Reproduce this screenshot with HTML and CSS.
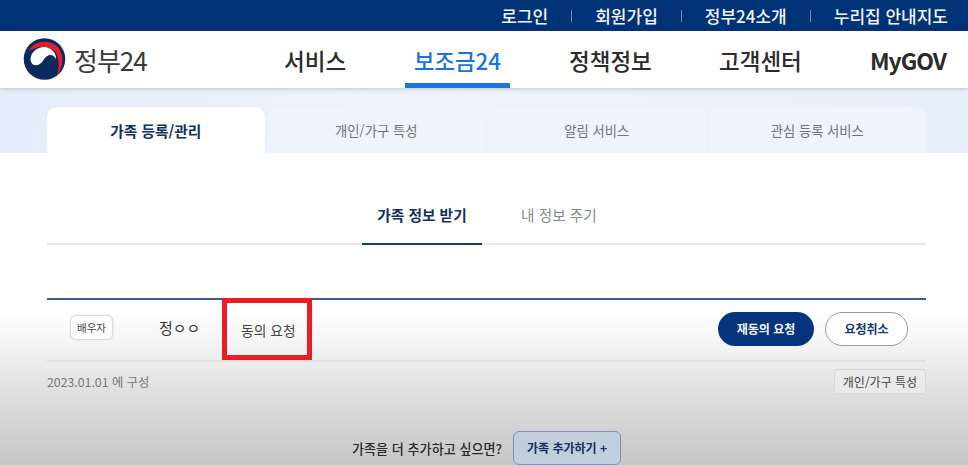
FILE: index.html
```html
<!DOCTYPE html>
<html lang="ko">
<head>
<meta charset="utf-8">
<title>정부24 가족 등록/관리</title>
<link rel="stylesheet" href="styles.css">
</head>
<body>
<div class="topbar">
  <a class="toplink">로그인</a><i class="sep"></i>
  <a class="toplink">회원가입</a><i class="sep"></i>
  <a class="toplink">정부24소개</a><i class="sep"></i>
  <a class="toplink">누리집 안내지도</a>
</div>
<header class="header">
  <div class="logo">
    <svg class="emblem" viewBox="0 0 42 42" width="43" height="42">
      <circle cx="21" cy="21" r="20.8" fill="#0c2a5e"/>
      <path d="M5.500 13C9.500 4 21 2 29.500 5.500C39 10 43 24 33 39C36 29 36 21 32.500 15C29 9.500 20 7.500 14 9.500C11 10.500 8 11 5.500 13Z" fill="#e21f2d"/>
      <path d="M7 22C7 14 14 9 20.500 9C27 9 33 14 32.500 21C29.500 15.500 24 15.500 20 22C16 29 8 29 7 22Z" fill="#fff"/>
    </svg>
    <span class="logotext">정부24</span>
  </div>
  <nav class="nav">
    <a class="navitem n1">서비스</a>
    <a class="navitem n2">보조금24</a>
    <a class="navitem n3">정책정보</a>
    <a class="navitem n4">고객센터</a>
    <a class="navitem n5">MyGOV</a>
  </nav>
</header>
<div class="tabband">
  <div class="tabs">
    <a class="tab current">가족 등록/관리</a>
    <a class="tab">개인/가구 특성</a>
    <a class="tab">알림 서비스</a>
    <a class="tab">관심 등록 서비스</a>
  </div>
</div>
<main class="content">
  <div class="subtabs">
    <a class="subtab on">가족 정보 받기</a>
    <a class="subtab">내 정보 주기</a>
  </div>
  <section class="family">
    <div class="member">
      <span class="badge">배우자</span>
      <span class="name">정ㅇㅇ</span>
      <span class="status">동의 요청</span>
      <span class="actions">
        <a class="pill primary">재동의 요청</a>
        <a class="pill outline">요청취소</a>
      </span>
    </div>
    <div class="meta">
      <span class="date">2023.01.01 에 구성</span>
      <a class="attr">개인/가구 특성</a>
    </div>
  </section>
  <div class="addrow">
    <span class="addtext">가족을 더 추가하고 싶으면?</span>
    <a class="addbtn">가족 추가하기 +</a>
  </div>
</main>
</body>
</html>
```
FILE: styles.css
```css
*, *::after { box-sizing: border-box; }
html, body { margin: 0; height: 100%; }
body {
  width: 968px;
  height: 465px;
  overflow: hidden;
  font-family: "Noto Sans CJK KR", "Noto Sans", sans-serif;
  background: linear-gradient(#fff 0, #fff 310px, #f4f4f4 345px, #e2e2e2 385px, #c6c6c6 465px);
  color: #333;
}
.topbar {
  height: 31px;
  background: #003276;
  display: flex;
  align-items: center;
  justify-content: flex-end;
  padding-right: 20px;
}
.toplink { color: #f2f5fa; font-size: 17px; font-weight: 500; line-height: 31px; white-space: nowrap; }
.sep { width: 1px; height: 12px; background: #6f88ad; margin: 0 23px; }
.header {
  height: 57px;
  background: #fff;
  display: flex;
  position: relative;
  z-index: 1;
  box-shadow: 0 1px 4px rgba(60, 80, 120, .25);
}
.logo { display: flex; align-items: center; padding-left: 23px; width: 284px; height: 56px; gap: 8px; }
.emblem { display: block; flex: none; }
.logotext { font-size: 26px; font-weight: 400; color: #3a3a3a; letter-spacing: -1px; }
.nav { display: flex; flex: 1; }
.navitem { font-size: 22.5px; font-weight: 500; color: #2b2b2b; line-height: 58px; height: 57px; white-space: nowrap; }
.n1 { width: 121px; }
.n2 { width: 105px; padding-left: 9px; margin-right: 59px; color: #1a73d8; font-size: 22.3px; border-bottom: 5px solid #1a73e0; }
.n3 { width: 150px; }
.n4 { width: 151px; }
.n5 { font-size: 23px; font-weight: 700; letter-spacing: -1px; }
.tabband {
  height: 65px;
  background: linear-gradient(100deg, #e3edf9, #eef3fb 40%, #e7effa);
  padding: 19px 42px 0 47px;
}
.tabs { display: grid; grid-template-columns: repeat(4, 1fr); column-gap: 3px; }
.tab {
  height: 46px;
  border-radius: 10px 10px 0 0;
  background: #eef4fb;
  color: #6d737c;
  font-size: 13.3px;
  line-height: 48px;
  text-align: center;
}
.tab.current { background: #fff; color: #12305f; font-size: 14.7px; font-weight: 700; }
.content { padding: 0 42px 0 47px; }
.subtabs {
  margin-top: 42px;
  height: 50px;
  border-bottom: 2px solid #e9e9e9;
  display: flex;
  padding-left: 315px;
}
.subtab { font-size: 14.7px; line-height: 40px; color: #85898e; height: 50px; width: 120px; text-align: center; margin-right: 39px; white-space: nowrap; }
.subtab.on { color: #14305f; font-weight: 700; border-bottom: 2px solid #123a78; }
.subtab:last-child { width: 75px; }
.family { margin-top: 53px; border-top: 2px solid #3c5c90; }
.member {
  height: 62px;
  border-bottom: 2px solid #e2e2e2;
  display: flex;
  align-items: center;
}
.badge {
  margin-left: 23px;
  width: 43px;
  height: 25px;
  border: 1px solid #dcdcdc;
  border-radius: 6px;
  background: #fdfdfd;
  font-size: 10.5px;
  line-height: 23px;
  text-align: center;
  margin-top: -6px;
  color: #444;
  box-shadow: 0 0 2px rgba(0,0,0,.12);
}
.name { margin-left: 46px; font-size: 15px; color: #333; margin-top: -6px; width: 63px; white-space: nowrap; }
.status {
  font-size: 13.8px;
  color: #444;
  position: relative;
  margin-left: 19px;
  white-space: nowrap;
}
.status::after {
  content: "";
  position: absolute;
  left: -19px;
  top: -22px;
  width: 90px;
  height: 62px;
  border: 5px solid #ec1c24;
}
.actions { margin-left: auto; display: flex; gap: 11px; padding-right: 18px; margin-top: -3px; }
.pill {
  height: 34px;
  border-radius: 17px;
  font-size: 12px;
  font-weight: 700;
  line-height: 33px;
  text-align: center;
}
.primary { width: 96px; background: #04357c; color: #f2f5fa; }
.outline { width: 83px; border: 1px solid #9a9a9a; background: #fff; color: #17396f; line-height: 31px; }
.meta { display: flex; justify-content: space-between; align-items: flex-start; height: 42px; }
.date { font-size: 12.3px; color: #777; line-height: 40px; }
.attr {
  width: 92px;
  height: 25px;
  border: 1px solid #d6d6d6;
  border-radius: 3px;
  background: #eaeaea;
  font-size: 12px;
  line-height: 23px;
  text-align: center;
  color: #444;
  margin-top: 7px;
}
.addrow { display: flex; justify-content: center; align-items: center; gap: 11px; margin-top: 27px; }
.addtext { font-size: 13.1px; color: #2a2a2a; font-weight: 500; }
.addbtn {
  width: 108px;
  height: 34px;
  border: 1px solid #7f93b0;
  border-radius: 6px;
  background: #c0cede;
  color: #14305f;
  font-size: 12px;
  font-weight: 700;
  line-height: 32px;
  text-align: center;
}
```
